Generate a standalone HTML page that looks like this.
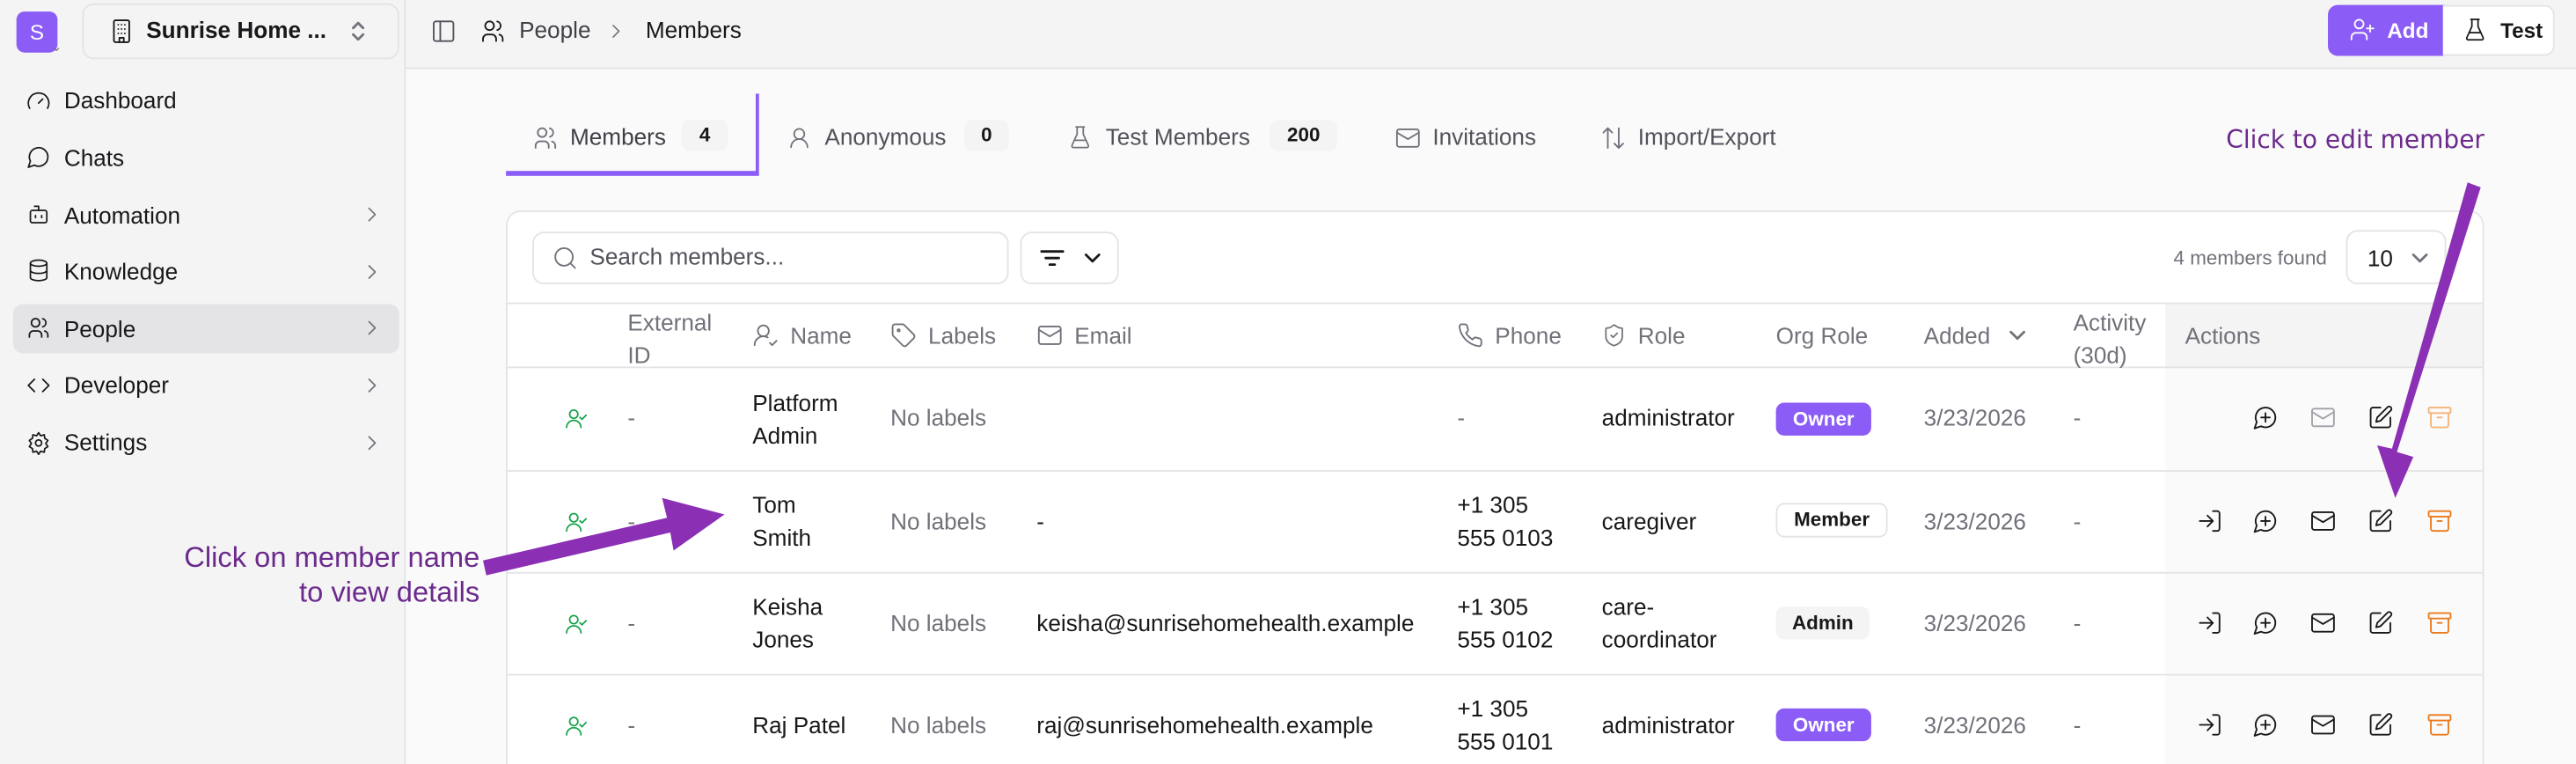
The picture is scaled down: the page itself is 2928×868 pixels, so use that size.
<!DOCTYPE html>
<html><head><meta charset="utf-8"><style>
*{box-sizing:border-box;margin:0;padding:0}
html,body{width:2928px;height:868px;overflow:hidden;background:#fafafa}
#w{position:absolute;left:0;top:0;width:1568px;height:465px;transform:scale(1.86735);transform-origin:0 0;font-family:"Liberation Sans",Arial,sans-serif;font-size:14px;color:#18181b;background:#fafafa;overflow:hidden}
.a{position:absolute}
svg{position:absolute;fill:none;stroke:currentColor;stroke-width:1.5;stroke-linecap:round;stroke-linejoin:round}
.nav{position:absolute;left:39px;font-size:14px;color:#18181b}
.g{color:#71717a}
.badge{position:absolute;height:19px;border-radius:5px;background:#f4f4f5;font-size:12px;font-weight:bold;text-align:center;line-height:19px}
.th{position:absolute;color:#71717a;font-size:14px}
.td{position:absolute;font-size:14px;line-height:20px}
.hl{position:absolute;left:308px;width:1203px;height:1px;background:#e4e4e7}
</style></head><body><div id="w">
<svg width="0" height="0"><defs>
<g id="li"><path d="M15 3h4a2 2 0 0 1 2 2v14a2 2 0 0 1-2 2h-4M10 17l5-5-5-5M15 12H3"/></g>
<g id="ch"><path d="M7.9 20A9 9 0 1 0 4 16.1L2 22z"/><path d="M8 12h8M12 8v8"/></g>
<g id="ml"><rect x="2" y="4" width="20" height="16" rx="2"/><path d="M22 7l-10 6L2 7"/></g>
<g id="ed"><path d="M12 3H5a2 2 0 0 0-2 2v14a2 2 0 0 0 2 2h14a2 2 0 0 0 2-2v-7"/><path d="M18.4 2.6a2.1 2.1 0 1 1 3 3L12 15l-4 1 1-4z"/></g>
<g id="ar"><rect x="2" y="3" width="20" height="5" rx="1"/><path d="M4 8v11a2 2 0 0 0 2 2h12a2 2 0 0 0 2-2V8M10 12h4"/></g>
<g id="cv"><path d="M9 6l6 6-6 6"/></g>
</defs></svg>
<!-- sidebar -->
<div class="a" style="left:0;top:0;width:247px;height:465px;background:#f4f4f5;border-right:1px solid #e4e4e7"></div>
<div class="a" style="left:10px;top:7px;width:25px;height:25px;border-radius:5px;background:#8b5cf6;color:#fff;font-size:13px;text-align:center;line-height:25px">S</div>
<div class="a g" style="left:31px;top:24px;font-size:8px">⌄</div>
<div class="a" style="left:50px;top:2px;width:193px;height:34px;border:1px solid #e4e4e7;border-radius:7px;background:#f4f4f5"></div>
<svg style="left:66px;top:11px" width="16" height="16" viewBox="0 0 24 24"><rect x="5" y="2" width="14" height="20" rx="1.5"/><path d="M9 6h.01M12 6h.01M15 6h.01M9 10h.01M12 10h.01M15 10h.01M9 14h.01M12 14h.01M15 14h.01M10 22v-4h4v4"/></svg>
<div class="a" style="left:89px;top:10px;font-size:14px;font-weight:bold">Sunrise Home ...</div>
<svg style="left:211px;top:11px;color:#71717a" width="14" height="16" viewBox="0 0 14 16"><path d="M4 6l3-3 3 3M4 10l3 3 3-3"/></svg>

<div class="a" style="left:8px;top:185px;width:235px;height:30px;border-radius:6px;background:#e4e4e7"></div>
<svg style="left:16px;top:54px" width="15" height="15" viewBox="0 0 24 24"><path d="M12 14l4-4"/><path d="M3.3 19A10 10 0 1 1 20.7 19"/></svg><div class="nav" style="top:53px">Dashboard</div>
<svg style="left:16px;top:88px" width="15" height="15" viewBox="0 0 24 24"><path d="M7.9 20A9 9 0 1 0 4 16.1L2 22z"/></svg><div class="nav" style="top:88px">Chats</div>
<svg style="left:16px;top:123px" width="15" height="15" viewBox="0 0 24 24"><path d="M12 8V4H8"/><rect x="4" y="8" width="16" height="12" rx="2"/><path d="M9 13v2M15 13v2"/></svg><div class="nav" style="top:123px">Automation</div>
<svg style="left:219px;top:123px;color:#71717a" width="15" height="15" viewBox="0 0 24 24"><use href="#cv"/></svg>
<svg style="left:16px;top:157px" width="15" height="15" viewBox="0 0 24 24"><ellipse cx="12" cy="5" rx="8" ry="3"/><path d="M4 5v14a8 3 0 0 0 16 0V5M4 12a8 3 0 0 0 16 0"/></svg><div class="nav" style="top:157px">Knowledge</div>
<svg style="left:219px;top:158px;color:#71717a" width="15" height="15" viewBox="0 0 24 24"><use href="#cv"/></svg>
<svg style="left:16px;top:192px" width="15" height="15" viewBox="0 0 24 24"><circle cx="9" cy="7" r="4"/><path d="M3 21v-2a4 4 0 0 1 4-4h4a4 4 0 0 1 4 4v2M16 3.1a4 4 0 0 1 0 7.8M21 21v-2a4 4 0 0 0-3-3.9"/></svg><div class="nav" style="top:192px">People</div>
<svg style="left:219px;top:192px;color:#71717a" width="15" height="15" viewBox="0 0 24 24"><use href="#cv"/></svg>
<svg style="left:16px;top:227px" width="15" height="15" viewBox="0 0 24 24"><path d="M8 6l-6 6 6 6M16 6l6 6-6 6"/></svg><div class="nav" style="top:226px">Developer</div>
<svg style="left:219px;top:227px;color:#71717a" width="15" height="15" viewBox="0 0 24 24"><use href="#cv"/></svg>
<svg style="left:16px;top:262px" width="15" height="15" viewBox="0 0 24 24"><circle cx="12" cy="12" r="3"/><path d="M12 2l2 3 3.5-1 .5 3.5 3 2-2 3 2 3-3 2-.5 3.5-3.5-1-2 3-2-3-3.5 1-.5-3.5-3-2 2-3-2-3 3-2 .5-3.5 3.5 1z"/></svg><div class="nav" style="top:261px">Settings</div>
<svg style="left:219px;top:262px;color:#71717a" width="15" height="15" viewBox="0 0 24 24"><use href="#cv"/></svg>

<!-- topbar -->
<div class="a" style="left:247px;top:0;width:1321px;height:42px;background:#f4f4f5;border-bottom:1px solid #e4e4e7"></div>
<svg style="left:262px;top:11px;color:#52525b" width="16" height="16" viewBox="0 0 24 24"><rect x="3" y="3" width="18" height="18" rx="2"/><path d="M9 3v18"/></svg>
<svg style="left:292px;top:11px" width="16" height="16" viewBox="0 0 24 24"><circle cx="9" cy="7" r="4"/><path d="M3 21v-2a4 4 0 0 1 4-4h4a4 4 0 0 1 4 4v2M16 3.1a4 4 0 0 1 0 7.8M21 21v-2a4 4 0 0 0-3-3.9"/></svg>
<div class="a" style="left:316px;top:10px;font-size:14px;color:#3f3f46">People</div>
<svg style="left:368px;top:12px;color:#71717a" width="14" height="14" viewBox="0 0 24 24"><use href="#cv"/></svg>
<div class="a" style="left:393px;top:10px;font-size:14px">Members</div>
<div class="a" style="left:1417px;top:3px;width:71px;height:31px;background:#8b5cf6;border-radius:6px 0 0 6px;color:#fff;font-weight:bold;font-size:13px;line-height:31px;padding-left:36px">Add</div>
<svg style="left:1430px;top:10px;color:#fff" width="16" height="16" viewBox="0 0 24 24"><circle cx="9" cy="7" r="4"/><path d="M2 21v-2a4 4 0 0 1 4-4h6a4 4 0 0 1 4 4v2M19 8v6M22 11h-6"/></svg>
<div class="a" style="left:1487px;top:3px;width:68px;height:31px;background:#fff;border:1px solid #e4e4e7;border-left:none;border-radius:0 6px 6px 0;font-weight:bold;font-size:13px;line-height:30px;padding-left:35px">Test</div>
<svg style="left:1499px;top:10px" width="15" height="16" viewBox="0 0 24 24"><path d="M9 2v7L4 20a1.5 1.5 0 0 0 1.4 2h13.2A1.5 1.5 0 0 0 20 20L15 9V2M8 2h8M6.5 15h11"/></svg>

<!-- tabs -->
<svg style="left:324px;top:76px;color:#71717a" width="16" height="16" viewBox="0 0 24 24"><circle cx="9" cy="7" r="4"/><path d="M3 21v-2a4 4 0 0 1 4-4h4a4 4 0 0 1 4 4v2M16 3.1a4 4 0 0 1 0 7.8M21 21v-2a4 4 0 0 0-3-3.9"/></svg>
<div class="a" style="left:347px;top:75px;color:#3f3f46">Members</div><div class="badge" style="left:415px;top:73px;width:28px">4</div>
<div class="a" style="left:308px;top:104px;width:152px;height:3px;background:#8b5cf6"></div>
<div class="a" style="left:460px;top:57px;width:2px;height:50px;background:#8b5cf6"></div>
<svg style="left:479px;top:76px;color:#71717a" width="15" height="16" viewBox="0 0 24 24"><circle cx="12" cy="8" r="5"/><path d="M20 21a8 8 0 0 0-16 0"/></svg>
<div class="a" style="left:502px;top:75px;color:#52525b">Anonymous</div><div class="badge" style="left:587px;top:73px;width:27px">0</div>
<svg style="left:650px;top:75px;color:#71717a" width="15" height="17" viewBox="0 0 24 24"><path d="M9 2v7L4 20a1.5 1.5 0 0 0 1.4 2h13.2A1.5 1.5 0 0 0 20 20L15 9V2M8 2h8M6.5 15h11"/></svg>
<div class="a" style="left:673px;top:75px;color:#52525b">Test Members</div><div class="badge" style="left:773px;top:73px;width:41px">200</div>
<svg style="left:849px;top:76px;color:#71717a" width="16" height="16" viewBox="0 0 24 24"><rect x="2" y="4" width="20" height="16" rx="2"/><path d="M22 7l-10 6L2 7"/></svg>
<div class="a" style="left:872px;top:75px;color:#52525b">Invitations</div>
<svg style="left:974px;top:76px;color:#71717a" width="16" height="16" viewBox="0 0 24 24"><path d="M7 21V3M3 7l4-4 4 4M17 3v18M13 17l4 4 4-4"/></svg>
<div class="a" style="left:997px;top:75px;color:#52525b">Import/Export</div>

<!-- card -->
<div class="a" style="left:308px;top:128px;width:1204px;height:360px;background:#fff;border:1px solid #e4e4e7;border-radius:9px"></div>
<div class="a" style="left:324px;top:141px;width:290px;height:32px;border:1px solid #e4e4e7;border-radius:7px;background:#fff"></div>
<svg style="left:336px;top:149px;color:#71717a" width="16" height="16" viewBox="0 0 24 24"><circle cx="11" cy="11" r="8"/><path d="M21 21l-4.3-4.3"/></svg>
<div class="a" style="left:359px;top:148px;color:#52525b;font-size:14px">Search members...</div>
<div class="a" style="left:621px;top:141px;width:60px;height:32px;border:1px solid #e4e4e7;border-radius:7px"></div>
<svg style="left:632px;top:149px" width="38" height="16" viewBox="0 0 38 16"><path d="M2 4h13M4.5 8h8M7 12h3M29 6l4 4 4-4"/></svg>
<div class="a g" style="left:1323px;top:150px;font-size:12px">4 members found</div>
<div class="a" style="left:1428px;top:140px;width:61px;height:33px;border:1px solid #e4e4e7;border-radius:7px;background:#fff;padding:8px 0 0 12px;font-size:14px">10</div>
<svg style="left:1466px;top:150px;color:#71717a" width="14" height="14" viewBox="0 0 14 14"><path d="M3 5l4 4 4-4"/></svg>

<!-- table -->
<div class="a" style="left:1318px;top:184px;width:193px;height:39px;background:#f4f4f5"></div>
<div class="a" style="left:1318px;top:224px;width:193px;height:241px;background:#fafafa"></div>
<div class="hl" style="top:184px"></div><div class="hl" style="top:223px"></div><div class="hl" style="top:286px"></div><div class="hl" style="top:348px"></div><div class="hl" style="top:410px"></div>
<div class="th" style="left:382px;top:186px;line-height:20px">External<br>ID</div>
<svg style="left:458px;top:196px;color:#71717a" width="16" height="16" viewBox="0 0 24 24"><circle cx="10" cy="8" r="5"/><path d="M2 21a8 8 0 0 1 12-7M16 19l2 2 4-4"/></svg><div class="th" style="left:481px;top:196px">Name</div>
<svg style="left:542px;top:196px;color:#71717a" width="16" height="16" viewBox="0 0 24 24"><path d="M12.6 2.6A2 2 0 0 0 11.2 2H4a2 2 0 0 0-2 2v7.2a2 2 0 0 0 .6 1.4l8.7 8.7a2.4 2.4 0 0 0 3.4 0l6.6-6.6a2.4 2.4 0 0 0 0-3.4z"/><circle cx="7.5" cy="7.5" r="1"/></svg><div class="th" style="left:565px;top:196px">Labels</div>
<svg style="left:631px;top:196px;color:#71717a" width="16" height="16" viewBox="0 0 24 24"><rect x="2" y="4" width="20" height="16" rx="2"/><path d="M22 7l-10 6L2 7"/></svg><div class="th" style="left:654px;top:196px">Email</div>
<svg style="left:887px;top:196px;color:#71717a" width="16" height="16" viewBox="0 0 24 24"><path d="M22 16.9v3a2 2 0 0 1-2.2 2 19.8 19.8 0 0 1-8.6-3.1 19.5 19.5 0 0 1-6-6A19.8 19.8 0 0 1 2.1 4.2 2 2 0 0 1 4.1 2h3a2 2 0 0 1 2 1.7c.1 1 .4 1.9.7 2.800a2 2 0 0 1-.5 2.1L8 9.8a16 16 0 0 0 6 6l1.3-1.3a2 2 0 0 1 2.1-.4c.9.3 1.8.6 2.8.7a2 2 0 0 1 1.7 2z"/></svg><div class="th" style="left:910px;top:196px">Phone</div>
<svg style="left:975px;top:196px;color:#71717a" width="15" height="16" viewBox="0 0 24 24"><path d="M20 13c0 5-3.5 7.5-7.7 9a1 1 0 0 1-.7 0C7.5 20.5 4 18 4 13V6a1 1 0 0 1 1-1c2 0 4.5-1.2 6.2-2.7a1.2 1.2 0 0 1 1.5 0C14.5 3.8 17 5 19 5a1 1 0 0 1 1 1z"/><path d="M9 12l2 2 4-4"/></svg><div class="th" style="left:997px;top:196px">Role</div>
<div class="th" style="left:1081px;top:196px">Org Role</div>
<div class="th" style="left:1171px;top:196px">Added</div>
<svg style="left:1221px;top:197px;color:#71717a" width="14" height="14" viewBox="0 0 14 14"><path d="M3 5l4 4 4-4"/></svg>
<div class="th" style="left:1262px;top:186px;line-height:20px">Activity<br>(30d)</div>
<div class="th" style="left:1330px;top:196px">Actions</div>

<!-- row 1 -->
<svg style="left:343px;top:247px;color:#16a34a" width="15" height="15" viewBox="0 0 24 24"><circle cx="10" cy="8" r="4"/><path d="M3 21a7 7 0 0 1 14 0M16 11l2 2 4-4"/></svg>
<div class="td g" style="left:382px;top:244px">-</div>
<div class="td" style="left:458px;top:235px">Platform<br>Admin</div>
<div class="td g" style="left:542px;top:244px">No labels</div>
<div class="td g" style="left:887px;top:244px">-</div>
<div class="td" style="left:975px;top:244px">administrator</div>
<div class="a" style="left:1081px;top:245px;width:58px;height:20px;border-radius:5px;background:#8b5cf6;color:#fff;font-size:12px;font-weight:bold;text-align:center;line-height:20px">Owner</div>
<div class="td g" style="left:1171px;top:244px">3/23/2026</div>
<div class="td g" style="left:1262px;top:244px">-</div>
<!-- row 2 -->
<svg style="left:343px;top:310px;color:#16a34a" width="15" height="15" viewBox="0 0 24 24"><circle cx="10" cy="8" r="4"/><path d="M3 21a7 7 0 0 1 14 0M16 11l2 2 4-4"/></svg>
<div class="td g" style="left:382px;top:307px">-</div>
<div class="td" style="left:458px;top:297px">Tom<br>Smith</div>
<div class="td g" style="left:542px;top:307px">No labels</div>
<div class="td" style="left:631px;top:307px">-</div>
<div class="td" style="left:887px;top:297px">+1 305<br>555 0103</div>
<div class="td" style="left:975px;top:307px">caregiver</div>
<div class="a" style="left:1081px;top:306px;width:68px;height:21px;border-radius:5px;border:1px solid #e4e4e7;background:#fff;font-size:12px;font-weight:bold;text-align:center;line-height:19px">Member</div>
<div class="td g" style="left:1171px;top:307px">3/23/2026</div>
<div class="td g" style="left:1262px;top:307px">-</div>
<!-- row 3 -->
<svg style="left:343px;top:372px;color:#16a34a" width="15" height="15" viewBox="0 0 24 24"><circle cx="10" cy="8" r="4"/><path d="M3 21a7 7 0 0 1 14 0M16 11l2 2 4-4"/></svg>
<div class="td g" style="left:382px;top:369px">-</div>
<div class="td" style="left:458px;top:359px">Keisha<br>Jones</div>
<div class="td g" style="left:542px;top:369px">No labels</div>
<div class="td" style="left:631px;top:369px">keisha@sunrisehomehealth.example</div>
<div class="td" style="left:887px;top:359px">+1 305<br>555 0102</div>
<div class="td" style="left:975px;top:359px">care-<br>coordinator</div>
<div class="a" style="left:1081px;top:369px;width:57px;height:20px;border-radius:5px;background:#f4f4f5;font-size:12px;font-weight:bold;text-align:center;line-height:20px">Admin</div>
<div class="td g" style="left:1171px;top:369px">3/23/2026</div>
<div class="td g" style="left:1262px;top:369px">-</div>
<!-- row 4 -->
<svg style="left:343px;top:434px;color:#16a34a" width="15" height="15" viewBox="0 0 24 24"><circle cx="10" cy="8" r="4"/><path d="M3 21a7 7 0 0 1 14 0M16 11l2 2 4-4"/></svg>
<div class="td g" style="left:382px;top:431px">-</div>
<div class="td" style="left:458px;top:431px">Raj Patel</div>
<div class="td g" style="left:542px;top:431px">No labels</div>
<div class="td" style="left:631px;top:431px">raj@sunrisehomehealth.example</div>
<div class="td" style="left:887px;top:421px">+1 305<br>555 0101</div>
<div class="td" style="left:975px;top:431px">administrator</div>
<div class="a" style="left:1081px;top:431px;width:58px;height:20px;border-radius:5px;background:#8b5cf6;color:#fff;font-size:12px;font-weight:bold;text-align:center;line-height:20px">Owner</div>
<div class="td g" style="left:1171px;top:431px">3/23/2026</div>
<div class="td g" style="left:1262px;top:431px">-</div>

<!-- action icons -->
<svg style="left:1371px;top:246px" width="16" height="16" viewBox="0 0 24 24"><use href="#ch"/></svg>
<svg style="left:1406px;top:246px;color:#a1a1aa" width="16" height="16" viewBox="0 0 24 24"><use href="#ml"/></svg>
<svg style="left:1441px;top:246px" width="16" height="16" viewBox="0 0 24 24"><use href="#ed"/></svg>
<svg style="left:1477px;top:246px;color:#f5b37a" width="16" height="16" viewBox="0 0 24 24"><use href="#ar"/></svg>

<svg style="left:1337px;top:309px" width="16" height="16" viewBox="0 0 24 24"><use href="#li"/></svg>
<svg style="left:1371px;top:309px" width="16" height="16" viewBox="0 0 24 24"><use href="#ch"/></svg>
<svg style="left:1406px;top:309px" width="16" height="16" viewBox="0 0 24 24"><use href="#ml"/></svg>
<svg style="left:1441px;top:309px" width="16" height="16" viewBox="0 0 24 24"><use href="#ed"/></svg>
<svg style="left:1477px;top:309px;color:#ea7a1e" width="16" height="16" viewBox="0 0 24 24"><use href="#ar"/></svg>

<svg style="left:1337px;top:371px" width="16" height="16" viewBox="0 0 24 24"><use href="#li"/></svg>
<svg style="left:1371px;top:371px" width="16" height="16" viewBox="0 0 24 24"><use href="#ch"/></svg>
<svg style="left:1406px;top:371px" width="16" height="16" viewBox="0 0 24 24"><use href="#ml"/></svg>
<svg style="left:1441px;top:371px" width="16" height="16" viewBox="0 0 24 24"><use href="#ed"/></svg>
<svg style="left:1477px;top:371px;color:#ea7a1e" width="16" height="16" viewBox="0 0 24 24"><use href="#ar"/></svg>

<svg style="left:1337px;top:433px" width="16" height="16" viewBox="0 0 24 24"><use href="#li"/></svg>
<svg style="left:1371px;top:433px" width="16" height="16" viewBox="0 0 24 24"><use href="#ch"/></svg>
<svg style="left:1406px;top:433px" width="16" height="16" viewBox="0 0 24 24"><use href="#ml"/></svg>
<svg style="left:1441px;top:433px" width="16" height="16" viewBox="0 0 24 24"><use href="#ed"/></svg>
<svg style="left:1477px;top:433px;color:#ea7a1e" width="16" height="16" viewBox="0 0 24 24"><use href="#ar"/></svg>

<!-- annotations -->
<div class="a" style="left:1355px;top:76px;font-family:'DejaVu Sans',sans-serif;font-size:15px;color:#6b2a8c;letter-spacing:0px">Click to edit member</div>
<div class="a" style="left:40px;top:329px;width:252px;text-align:right;font-size:17.5px;line-height:21px;color:#6b2a8c">Click on member name<br>to view details</div>
<svg style="left:0;top:0;stroke:none;fill:#8b30b5" width="1568" height="465" viewBox="0 0 1568 465">
<path d="M1502 111 L1510 114 L1459 275 L1469 278 L1458 303 L1447 271 L1456 273 Z"/>
<path d="M294 341 L296 350 L408 324 L410 335 L441 313 L403 303 L406 315 Z"/>
</svg>
</div></body></html>
